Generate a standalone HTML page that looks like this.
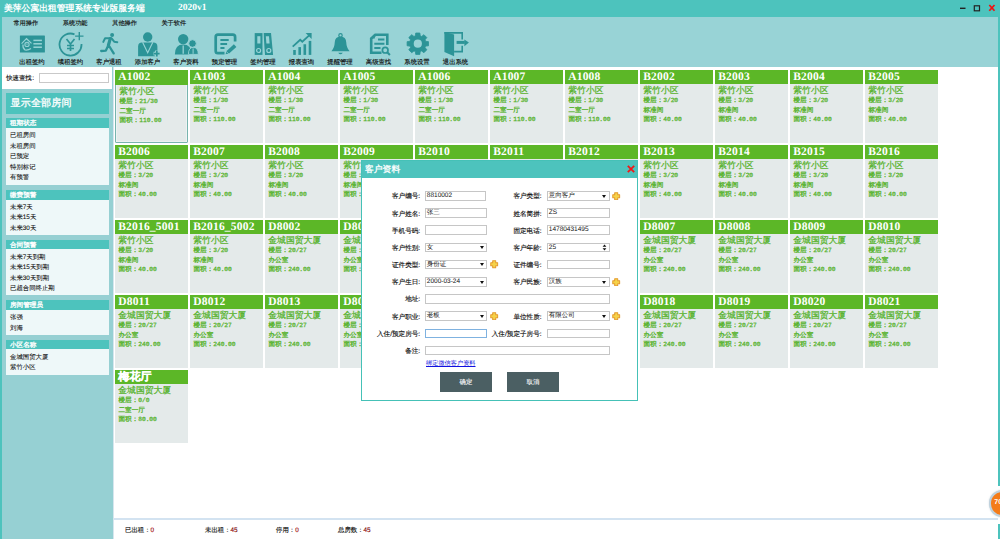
<!DOCTYPE html>
<html><head><meta charset="utf-8"><style>
*{margin:0;padding:0;box-sizing:border-box}
html,body{width:1000px;height:539px;overflow:hidden;background:#fff;font-family:"Liberation Sans",sans-serif;position:relative;text-rendering:geometricPrecision}
.abs{position:absolute}
#title{position:absolute;left:0;top:0;width:1000px;height:17px;background:#4dc3bd}
#title .t{position:absolute;left:4px;top:1px;font-family:"Liberation Serif",serif;font-weight:bold;color:#fff;font-size:8.8px;line-height:15px;white-space:nowrap}
#title .v{position:absolute;left:178px;top:1px;font-family:"Liberation Serif",serif;font-weight:bold;color:#fff;font-size:9.5px;line-height:15px}
#tb{position:absolute;left:0;top:17px;width:1000px;height:50px;background:#98d3d6;border-left:2px solid #4dc3bd;border-right:2px solid #4dc3bd}
.mn{position:absolute;top:20px;font-size:6.2px;line-height:8px;color:#111;-webkit-text-stroke:0.15px #111;white-space:nowrap}
.ico{position:absolute;top:30.5px;width:26px;height:26px}
.ico svg{display:block}
.tl{position:absolute;top:57.8px;width:50px;text-align:center;font-size:6.35px;line-height:9px;color:#111;-webkit-text-stroke:0.15px #111;white-space:nowrap}
#lp{position:absolute;left:0;top:67px;width:113px;height:472px;background:#96d0d3;border-left:2px solid #4dc3bd}
#qs{position:absolute;left:2px;top:67px;width:110px;height:22px;background:#fff}
#qs .l{position:absolute;left:4.2px;top:7.1px;font-size:6.4px;line-height:9px;color:#111;-webkit-text-stroke:0.15px #111;white-space:nowrap}
#qs .i{position:absolute;left:37.4px;top:6.4px;width:69.5px;height:9.2px;border:1px solid #c9c9c9;background:#fff}
#all{position:absolute;left:6px;top:93px;width:102.5px;height:21px;background:#4dc3bd;color:#fff;font-family:"Liberation Serif",serif;font-size:10px;line-height:21px;padding-left:4.5px;letter-spacing:0.2px;-webkit-text-stroke:0.3px #fff;white-space:nowrap}
.sh{position:absolute;left:6px;width:102.5px;background:#4dc3bd;color:#fff;-webkit-text-stroke:0.3px #fff;font-size:6.6px;padding-left:4px;white-space:nowrap}
.sb{position:absolute;left:6px;width:102.5px;background:#eef8f9}
.si{position:absolute;left:10px;font-size:6.4px;line-height:12px;color:#111;-webkit-text-stroke:0.08px #111;white-space:nowrap}
#main{position:absolute;left:113px;top:67px;width:885px;height:472px;background:#fff;border-left:1px solid #d6e6ee}
#rb{position:absolute;left:998px;top:17px;width:2px;height:522px;background:linear-gradient(to bottom,#4dc3bd 0,#4dc3bd 469.5px,#fff 469.5px,#fff 507px,#4dc3bd 507px)}
.card{position:absolute;width:73px;height:72.5px;background:#e4eaea}
.card.sel{border:1px solid #78b4ae;border-radius:1px;box-shadow:inset 0 0 0 0.6px #f4f8f8}
.card .hd{position:absolute;left:0;top:0;width:73px;height:13.6px;background:#5cb727}
.card.sel .hd{left:-1px;top:-1px;width:73px;height:14.6px}
.card .nm{position:absolute;left:3.2px;top:1px;font-family:"Liberation Serif",serif;font-weight:bold;color:#fff;font-size:11.5px;line-height:13px;letter-spacing:0.2px;white-space:nowrap}
.card .nm.cj{font-size:11px;top:0.5px;-webkit-text-stroke:0.3px #fff}
.card .cm{position:absolute;left:3.3px;top:15px;color:#55b22a;font-size:8.8px;-webkit-text-stroke:0.25px #55b22a;line-height:11px;white-space:nowrap}
.card .l1,.card .l2,.card .l3{position:absolute;left:3.5px;color:#55b22a;font-size:6.6px;line-height:8px;-webkit-text-stroke:0.3px #55b22a;white-space:nowrap}
.card .l1{top:26.6px} .card .l2{top:36.5px} .card .l3{top:45.7px}
.card .d{font-family:"Liberation Mono",monospace;font-size:6.3px;letter-spacing:-0.1px;-webkit-text-stroke:0.25px #55b22a}
#sep{position:absolute;left:114px;top:518px;width:884px;height:1.5px;background:#d3e3f1}
.st{position:absolute;top:525.8px;font-size:6.4px;line-height:9px;color:#111;-webkit-text-stroke:0.15px #111;white-space:nowrap}
.st b{font-weight:normal;color:#e02020;font-family:"Liberation Sans",sans-serif}
#orb{position:absolute;left:989.3px;top:490.2px;width:26.4px;height:26.4px;border-radius:50%;background:#f47c1a;border:2px solid #bfd2de;box-shadow:0 0 1.5px rgba(80,110,130,0.35)}
#orb span{position:absolute;left:3px;top:7px;color:#fff;font-size:7px;font-weight:bold}
#dlg{position:absolute;left:361px;top:160px;width:277px;height:241px;background:#fff;border:1.7px solid #45c1b7}
#dlg .h{position:absolute;left:0;top:0;width:100%;height:16.5px;background:#4dc3bd}
#dlg .h .t{position:absolute;left:3px;top:2px;color:#fff;font-family:"Liberation Serif",serif;font-size:8.8px;line-height:12px;-webkit-text-stroke:0.3px #fff}
.lb{position:absolute;text-align:right;font-size:6.6px;line-height:12px;color:#111;-webkit-text-stroke:0.15px #111;white-space:nowrap}
.in{position:absolute;height:9.5px;border:1px solid #c6c6c6;background:#fff;font-size:6.5px;line-height:8.4px;padding-left:0.8px;color:#111;white-space:nowrap;overflow:hidden}
.in.fo{border-color:#7fb2e0}
.arr{position:absolute;right:2.5px;top:2.5px;width:0;height:0;border-left:2.5px solid transparent;border-right:2.5px solid transparent;border-top:3px solid #111}
.spn{position:absolute;right:3px;top:0.5px;width:0;height:0;border-left:1.8px solid transparent;border-right:1.8px solid transparent;border-bottom:2.2px solid #111}
.spn::after{content:"";position:absolute;left:-1.8px;top:3.6px;border-left:1.8px solid transparent;border-right:1.8px solid transparent;border-top:2.2px solid #111}
.pl{position:absolute}
.lnk{position:absolute;left:426px;top:358.5px;font-size:6.2px;line-height:9px;color:#1010e0;text-decoration:underline;white-space:nowrap}
.btn{position:absolute;top:371.5px;width:52px;height:20.5px;background:#4b5f63;color:#f4f4f4;font-size:6.4px;line-height:22.5px;-webkit-text-stroke:0.1px #fff;text-align:center}
</style></head><body>
<div id="title"><div class="t">美萍公寓出租管理系统专业版服务端</div><div class="v">2020v1</div>
<svg class="abs" style="left:959px;top:4px" width="40" height="9" viewBox="0 0 40 9"><rect x="1" y="3.6" width="5.5" height="1.4" fill="#222"/><rect x="15.3" y="1.8" width="5.2" height="5" fill="none" stroke="#222" stroke-width="1.2"/><path d="M30.3 1 L35.5 6.8 M35.5 1 L30.3 6.8" stroke="#f01010" stroke-width="1.7"/></svg></div>
<div id="tb"></div>
<div class="mn" style="left:13.4px">常用操作</div><div class="mn" style="left:62.8px">系统功能</div><div class="mn" style="left:112.2px">其他操作</div><div class="mn" style="left:161.4px">关于软件</div>
<div class="ico" style="left:19.0px"><svg width="26" height="26" viewBox="0 0 26 26"><rect x="0.9" y="4.5" width="25" height="17" rx="0.5" fill="#2c9497"/>
<rect x="14.4" y="8.65" width="8.5" height="1.5" fill="#98d3d6"/><rect x="14.4" y="12.05" width="8.5" height="1.5" fill="#98d3d6"/><rect x="14.4" y="15.45" width="8.5" height="1.5" fill="#98d3d6"/>
<path d="M2.6 12.6 L7.5 7.7 L12.5 12.4 M4 13.5 Q3.5 17 6 19 Q9 19.5 12 17.5" stroke="#98d3d6" stroke-width="1.2" fill="none"/><circle cx="8" cy="13.4" r="2.1" stroke="#98d3d6" stroke-width="1.1" fill="none"/><path d="M8 12.2 v2" stroke="#98d3d6" stroke-width="0.8"/></svg></div><div class="tl" style="left:7.0px">出租签约</div><div class="ico" style="left:57.5px"><svg width="26" height="26" viewBox="0 0 26 26"><path d="M16.5 3.3 A11 11 0 1 0 23.5 13" stroke="#2c9497" stroke-width="1.8" fill="none"/>
<path d="M17.1 5.1 h8.4 M21.3 0.9 v8.4" stroke="#2c9497" stroke-width="1.4"/>
<path d="M8.5 8 L12.5 13 L16.5 8 M12.5 13 v7 M9 14.5 h7 M9 17.5 h7" stroke="#2c9497" stroke-width="1.7" fill="none"/></svg></div><div class="tl" style="left:45.5px">续租签约</div><div class="ico" style="left:96.0px"><svg width="26" height="26" viewBox="0 0 26 26"><circle cx="16.1" cy="3.9" r="2" fill="#2c9497"/>
<path d="M7.3 10.9 L9.1 7.3 L15.6 7.3 L18.2 10.7 L21.3 11.2" stroke="#2c9497" stroke-width="2" fill="none" stroke-linejoin="round" stroke-linecap="round"/>
<path d="M14.3 7.6 L12.4 14.2" stroke="#2c9497" stroke-width="3.2" stroke-linecap="round"/>
<path d="M12.5 14 L9.9 19.6 L5.2 20 M12.5 14 L17.7 22.4" stroke="#2c9497" stroke-width="2.3" fill="none" stroke-linejoin="round" stroke-linecap="round"/></svg></div><div class="tl" style="left:84.0px">客户退租</div><div class="ico" style="left:134.5px"><svg width="26" height="26" viewBox="0 0 26 26"><circle cx="12.7" cy="6" r="4.7" fill="#2c9497"/>
<path d="M3.1 25.2 V15.5 Q3.1 11.5 7 11.5 H18.3 Q22.4 11.5 22.4 15.5 V25.2 Z" fill="#2c9497"/>
<path d="M7.6 11.3 L12.7 21.8 L17.8 11.3" stroke="#98d3d6" stroke-width="1.1" fill="none"/>
<path d="M18.6 22.6 h6.4 M21.8 19.4 v6.4" stroke="#98d3d6" stroke-width="3.6"/><path d="M19 22.6 h5.6 M21.8 19.8 v5.6" stroke="#2c9497" stroke-width="1.7"/></svg></div><div class="tl" style="left:122.5px">添加客户</div><div class="ico" style="left:173.0px"><svg width="26" height="26" viewBox="0 0 26 26"><circle cx="10.2" cy="8.1" r="5.2" fill="#2c9497"/>
<path d="M1.9 23.4 Q1.9 13.5 10.2 13.5 Q18.5 13.5 18.5 23.4 Z" fill="#2c9497"/><path d="M10.2 14.5 V22.8" stroke="#98d3d6" stroke-width="1.3"/>
<circle cx="19.5" cy="12.5" r="3.8" fill="#2c9497" stroke="#98d3d6" stroke-width="0.9"/><path d="M15.4 23.4 Q15.4 16.4 20.3 16.4 Q25.3 16.4 25.3 23.4 Z" fill="#2c9497" stroke="#98d3d6" stroke-width="0.9"/><path d="M20.1 17.4 V22.8" stroke="#98d3d6" stroke-width="1"/></svg></div><div class="tl" style="left:161.0px">客户资料</div><div class="ico" style="left:211.5px"><svg width="26" height="26" viewBox="0 0 26 26"><path d="M23.1 10.4 V5.9 Q23.1 3.7 20.9 3.7 H5.9 Q3.7 3.7 3.7 5.9 V19.9 Q3.7 22.1 5.9 22.1 H12.5" stroke="#2c9497" stroke-width="2.7" fill="none"/>
<path d="M8.4 9.1 H16.7 M8.4 13 H15.1 M8.4 17.1 H12.5" stroke="#2c9497" stroke-width="2"/><path d="M13.6 23.2 L14.6 19.9 L21.9 13.3 L24.4 16 L17.1 22.6 Z" fill="#2c9497"/><path d="M14.4 20.6 L17 23" stroke="#98d3d6" stroke-width="0.7"/></svg></div><div class="tl" style="left:199.5px">预定管理</div><div class="ico" style="left:250.0px"><svg width="26" height="26" viewBox="0 0 26 26"><rect x="4.7" y="2.1" width="8" height="21.8" fill="#2c9497"/><path d="M13.5 2.1 H21 L23.1 23.9 H15 Z" fill="#2c9497"/>
<rect x="7.3" y="5.2" width="3.1" height="7.3" fill="#98d3d6"/><path d="M15.8 5.2 H19 L19.6 12.5 H16.4 Z" fill="#98d3d6"/><circle cx="8.6" cy="19.5" r="2" fill="none" stroke="#98d3d6" stroke-width="1.2"/><circle cx="18.8" cy="19.5" r="2" fill="none" stroke="#98d3d6" stroke-width="1.2"/><path d="M13.1 2 V24" stroke="#98d3d6" stroke-width="0.8"/></svg></div><div class="tl" style="left:238.0px">签约管理</div><div class="ico" style="left:288.5px"><svg width="26" height="26" viewBox="0 0 26 26"><path d="M3.7 15.6 L11.2 8.8 L13.3 10.7 L21 3.6" stroke="#2c9497" stroke-width="1.8" fill="none"/><path d="M16.6 2.1 H22.6 V8.1 Z" fill="#2c9497"/>
<rect x="4.2" y="19" width="2.6" height="4.9" fill="#2c9497"/><rect x="9.4" y="16.1" width="2.6" height="7.8" fill="#2c9497"/><rect x="14.5" y="13.25" width="2.6" height="10.65" fill="#2c9497"/><rect x="19.7" y="9.9" width="2.6" height="14" fill="#2c9497"/></svg></div><div class="tl" style="left:276.5px">报表查询</div><div class="ico" style="left:327.0px"><svg width="26" height="26" viewBox="0 0 26 26"><circle cx="13.5" cy="4.4" r="1.7" fill="none" stroke="#2c9497" stroke-width="1.2"/>
<path d="M13.5 5.8 Q19 5.8 19.2 11 Q19.5 17 22.6 20.3 H4.4 Q7.5 17 7.8 11 Q8 5.8 13.5 5.8Z" fill="#2c9497"/><path d="M11.2 21.8 Q13.5 24.8 15.8 21.8 Z" fill="#2c9497"/></svg></div><div class="tl" style="left:315.0px">提醒管理</div><div class="ico" style="left:365.5px"><svg width="26" height="26" viewBox="0 0 26 26"><path d="M15.5 21.8 H5.2 V7.5 L9.5 3.7 H21.3 V14" stroke="#2c9497" stroke-width="2.6" fill="none"/><path d="M3.9 7.6 L8.8 2.4 V7.6 Z" fill="#2c9497"/>
<path d="M12 8.6 H18.4 M8.3 12.7 H18.4 M8.3 16.9 H14.5" stroke="#2c9497" stroke-width="2"/><circle cx="19.2" cy="19.2" r="2.8" fill="none" stroke="#2c9497" stroke-width="1.7"/><path d="M21.2 21.2 L23.9 23.9" stroke="#2c9497" stroke-width="2.1"/></svg></div><div class="tl" style="left:353.5px">高级查找</div><div class="ico" style="left:404.0px"><svg width="26" height="26" viewBox="0 0 26 26"><path d="M11.38 4.87 L11.74 2.00 L15.86 2.00 L16.22 4.87 L17.63 5.45 L19.91 3.68 L22.82 6.59 L21.05 8.87 L21.63 10.28 L24.50 10.64 L24.50 14.76 L21.63 15.12 L21.05 16.53 L22.82 18.81 L19.91 21.72 L17.63 19.95 L16.22 20.53 L15.86 23.40 L11.74 23.40 L11.38 20.53 L9.97 19.95 L7.69 21.72 L4.78 18.81 L6.55 16.53 L5.97 15.12 L3.10 14.76 L3.10 10.64 L5.97 10.28 L6.55 8.87 L4.78 6.59 L7.69 3.68 L9.97 5.45Z" fill="#2c9497" stroke="#2c9497" stroke-width="0.8" stroke-linejoin="round"/><circle cx="13.8" cy="12.7" r="4.1" fill="#98d3d6"/></svg></div><div class="tl" style="left:392.0px">系统设置</div><div class="ico" style="left:442.5px"><svg width="26" height="26" viewBox="0 0 26 26"><path d="M1.4 1.9 H19.2 V8.6 M19.2 14.7 V20.6 H11.1" stroke="#2c9497" stroke-width="1.6" fill="none"/>
<path d="M1.4 1.1 L11.1 3.6 V25.3 L1.4 20.9 Z" fill="#2c9497"/><path d="M13.6 11.4 H21.8" stroke="#2c9497" stroke-width="3"/><path d="M21.4 8.4 L25.9 11.4 L21.4 15.3 Z" fill="#2c9497"/></svg></div><div class="tl" style="left:430.5px">退出系统</div>
<div id="lp"></div>
<div id="qs"><div class="l">快速查找<span style="font-family:Liberation Sans;margin-left:0.6px">:</span></div><div class="i"></div></div>
<div id="all">显示全部房间</div>
<div class="sh" style="top:118px;height:10px;line-height:11.6px">租期状态</div><div class="sb" style="top:128px;height:57px"></div><div class="si" style="top:130.4px">已租房间</div><div class="si" style="top:140.9px">未租房间</div><div class="si" style="top:151.4px">已预定</div><div class="si" style="top:161.9px">特别标记</div><div class="si" style="top:172.4px">有预警</div><div class="sh" style="top:190px;height:9.5px;line-height:11.1px">缴费预警</div><div class="sb" style="top:199.5px;height:35.5px"></div><div class="si" style="top:201.7px">未来7天</div><div class="si" style="top:212.2px">未来15天</div><div class="si" style="top:222.7px">未来30天</div><div class="sh" style="top:239.5px;height:9.5px;line-height:11.1px">合同预警</div><div class="sb" style="top:249px;height:46px"></div><div class="si" style="top:251.7px">未来7天到期</div><div class="si" style="top:262.2px">未来15天到期</div><div class="si" style="top:272.7px">未来30天到期</div><div class="si" style="top:283.2px">已超合同终止期</div><div class="sh" style="top:299.5px;height:10.5px;line-height:12.1px">房间管理员</div><div class="sb" style="top:310px;height:25px"></div><div class="si" style="top:312.0px">张强</div><div class="si" style="top:322.5px">刘海</div><div class="sh" style="top:339.5px;height:9.5px;line-height:11.1px">小区名称</div><div class="sb" style="top:349px;height:25.5px"></div><div class="si" style="top:351.7px">金城国贸大厦</div><div class="si" style="top:362.2px">紫竹小区</div>
<div id="main"></div>
<div id="rb"></div>
<div class="card sel" style="left:115px;top:70px"><div class="hd"><span class="nm">A1002</span></div><div class="cm">紫竹小区</div><div class="l1">楼层：<span class="d">21/30</span></div><div class="l2">二室一厅</div><div class="l3">面积：<span class="d">110.00</span></div></div><div class="card" style="left:190px;top:70px"><div class="hd"><span class="nm">A1003</span></div><div class="cm">紫竹小区</div><div class="l1">楼层：<span class="d">1/30</span></div><div class="l2">二室一厅</div><div class="l3">面积：<span class="d">110.00</span></div></div><div class="card" style="left:265px;top:70px"><div class="hd"><span class="nm">A1004</span></div><div class="cm">紫竹小区</div><div class="l1">楼层：<span class="d">1/30</span></div><div class="l2">二室一厅</div><div class="l3">面积：<span class="d">110.00</span></div></div><div class="card" style="left:340px;top:70px"><div class="hd"><span class="nm">A1005</span></div><div class="cm">紫竹小区</div><div class="l1">楼层：<span class="d">1/30</span></div><div class="l2">二室一厅</div><div class="l3">面积：<span class="d">110.00</span></div></div><div class="card" style="left:415px;top:70px"><div class="hd"><span class="nm">A1006</span></div><div class="cm">紫竹小区</div><div class="l1">楼层：<span class="d">1/30</span></div><div class="l2">二室一厅</div><div class="l3">面积：<span class="d">110.00</span></div></div><div class="card" style="left:490px;top:70px"><div class="hd"><span class="nm">A1007</span></div><div class="cm">紫竹小区</div><div class="l1">楼层：<span class="d">1/30</span></div><div class="l2">二室一厅</div><div class="l3">面积：<span class="d">110.00</span></div></div><div class="card" style="left:565px;top:70px"><div class="hd"><span class="nm">A1008</span></div><div class="cm">紫竹小区</div><div class="l1">楼层：<span class="d">1/30</span></div><div class="l2">二室一厅</div><div class="l3">面积：<span class="d">110.00</span></div></div><div class="card" style="left:640px;top:70px"><div class="hd"><span class="nm">B2002</span></div><div class="cm">紫竹小区</div><div class="l1">楼层：<span class="d">3/20</span></div><div class="l2">标准间</div><div class="l3">面积：<span class="d">40.00</span></div></div><div class="card" style="left:715px;top:70px"><div class="hd"><span class="nm">B2003</span></div><div class="cm">紫竹小区</div><div class="l1">楼层：<span class="d">3/20</span></div><div class="l2">标准间</div><div class="l3">面积：<span class="d">40.00</span></div></div><div class="card" style="left:790px;top:70px"><div class="hd"><span class="nm">B2004</span></div><div class="cm">紫竹小区</div><div class="l1">楼层：<span class="d">3/20</span></div><div class="l2">标准间</div><div class="l3">面积：<span class="d">40.00</span></div></div><div class="card" style="left:865px;top:70px"><div class="hd"><span class="nm">B2005</span></div><div class="cm">紫竹小区</div><div class="l1">楼层：<span class="d">3/20</span></div><div class="l2">标准间</div><div class="l3">面积：<span class="d">40.00</span></div></div><div class="card" style="left:115px;top:145px"><div class="hd"><span class="nm">B2006</span></div><div class="cm">紫竹小区</div><div class="l1">楼层：<span class="d">3/20</span></div><div class="l2">标准间</div><div class="l3">面积：<span class="d">40.00</span></div></div><div class="card" style="left:190px;top:145px"><div class="hd"><span class="nm">B2007</span></div><div class="cm">紫竹小区</div><div class="l1">楼层：<span class="d">3/20</span></div><div class="l2">标准间</div><div class="l3">面积：<span class="d">40.00</span></div></div><div class="card" style="left:265px;top:145px"><div class="hd"><span class="nm">B2008</span></div><div class="cm">紫竹小区</div><div class="l1">楼层：<span class="d">3/20</span></div><div class="l2">标准间</div><div class="l3">面积：<span class="d">40.00</span></div></div><div class="card" style="left:340px;top:145px"><div class="hd"><span class="nm">B2009</span></div><div class="cm">紫竹小区</div><div class="l1">楼层：<span class="d">3/20</span></div><div class="l2">标准间</div><div class="l3">面积：<span class="d">40.00</span></div></div><div class="card" style="left:415px;top:145px"><div class="hd"><span class="nm">B2010</span></div><div class="cm">紫竹小区</div><div class="l1">楼层：<span class="d">3/20</span></div><div class="l2">标准间</div><div class="l3">面积：<span class="d">40.00</span></div></div><div class="card" style="left:490px;top:145px"><div class="hd"><span class="nm">B2011</span></div><div class="cm">紫竹小区</div><div class="l1">楼层：<span class="d">3/20</span></div><div class="l2">标准间</div><div class="l3">面积：<span class="d">40.00</span></div></div><div class="card" style="left:565px;top:145px"><div class="hd"><span class="nm">B2012</span></div><div class="cm">紫竹小区</div><div class="l1">楼层：<span class="d">3/20</span></div><div class="l2">标准间</div><div class="l3">面积：<span class="d">40.00</span></div></div><div class="card" style="left:640px;top:145px"><div class="hd"><span class="nm">B2013</span></div><div class="cm">紫竹小区</div><div class="l1">楼层：<span class="d">3/20</span></div><div class="l2">标准间</div><div class="l3">面积：<span class="d">40.00</span></div></div><div class="card" style="left:715px;top:145px"><div class="hd"><span class="nm">B2014</span></div><div class="cm">紫竹小区</div><div class="l1">楼层：<span class="d">3/20</span></div><div class="l2">标准间</div><div class="l3">面积：<span class="d">40.00</span></div></div><div class="card" style="left:790px;top:145px"><div class="hd"><span class="nm">B2015</span></div><div class="cm">紫竹小区</div><div class="l1">楼层：<span class="d">3/20</span></div><div class="l2">标准间</div><div class="l3">面积：<span class="d">40.00</span></div></div><div class="card" style="left:865px;top:145px"><div class="hd"><span class="nm">B2016</span></div><div class="cm">紫竹小区</div><div class="l1">楼层：<span class="d">3/20</span></div><div class="l2">标准间</div><div class="l3">面积：<span class="d">40.00</span></div></div><div class="card" style="left:115px;top:220px"><div class="hd"><span class="nm">B2016_5001</span></div><div class="cm">紫竹小区</div><div class="l1">楼层：<span class="d">3/20</span></div><div class="l2">标准间</div><div class="l3">面积：<span class="d">40.00</span></div></div><div class="card" style="left:190px;top:220px"><div class="hd"><span class="nm">B2016_5002</span></div><div class="cm">紫竹小区</div><div class="l1">楼层：<span class="d">3/20</span></div><div class="l2">标准间</div><div class="l3">面积：<span class="d">40.00</span></div></div><div class="card" style="left:265px;top:220px"><div class="hd"><span class="nm">D8002</span></div><div class="cm">金城国贸大厦</div><div class="l1">楼层：<span class="d">20/27</span></div><div class="l2">办公室</div><div class="l3">面积：<span class="d">240.00</span></div></div><div class="card" style="left:340px;top:220px"><div class="hd"><span class="nm">D8003</span></div><div class="cm">金城国贸大厦</div><div class="l1">楼层：<span class="d">20/27</span></div><div class="l2">办公室</div><div class="l3">面积：<span class="d">240.00</span></div></div><div class="card" style="left:415px;top:220px"><div class="hd"><span class="nm">D8004</span></div><div class="cm">金城国贸大厦</div><div class="l1">楼层：<span class="d">20/27</span></div><div class="l2">办公室</div><div class="l3">面积：<span class="d">240.00</span></div></div><div class="card" style="left:490px;top:220px"><div class="hd"><span class="nm">D8005</span></div><div class="cm">金城国贸大厦</div><div class="l1">楼层：<span class="d">20/27</span></div><div class="l2">办公室</div><div class="l3">面积：<span class="d">240.00</span></div></div><div class="card" style="left:565px;top:220px"><div class="hd"><span class="nm">D8006</span></div><div class="cm">金城国贸大厦</div><div class="l1">楼层：<span class="d">20/27</span></div><div class="l2">办公室</div><div class="l3">面积：<span class="d">240.00</span></div></div><div class="card" style="left:640px;top:220px"><div class="hd"><span class="nm">D8007</span></div><div class="cm">金城国贸大厦</div><div class="l1">楼层：<span class="d">20/27</span></div><div class="l2">办公室</div><div class="l3">面积：<span class="d">240.00</span></div></div><div class="card" style="left:715px;top:220px"><div class="hd"><span class="nm">D8008</span></div><div class="cm">金城国贸大厦</div><div class="l1">楼层：<span class="d">20/27</span></div><div class="l2">办公室</div><div class="l3">面积：<span class="d">240.00</span></div></div><div class="card" style="left:790px;top:220px"><div class="hd"><span class="nm">D8009</span></div><div class="cm">金城国贸大厦</div><div class="l1">楼层：<span class="d">20/27</span></div><div class="l2">办公室</div><div class="l3">面积：<span class="d">240.00</span></div></div><div class="card" style="left:865px;top:220px"><div class="hd"><span class="nm">D8010</span></div><div class="cm">金城国贸大厦</div><div class="l1">楼层：<span class="d">20/27</span></div><div class="l2">办公室</div><div class="l3">面积：<span class="d">240.00</span></div></div><div class="card" style="left:115px;top:295px"><div class="hd"><span class="nm">D8011</span></div><div class="cm">金城国贸大厦</div><div class="l1">楼层：<span class="d">20/27</span></div><div class="l2">办公室</div><div class="l3">面积：<span class="d">240.00</span></div></div><div class="card" style="left:190px;top:295px"><div class="hd"><span class="nm">D8012</span></div><div class="cm">金城国贸大厦</div><div class="l1">楼层：<span class="d">20/27</span></div><div class="l2">办公室</div><div class="l3">面积：<span class="d">240.00</span></div></div><div class="card" style="left:265px;top:295px"><div class="hd"><span class="nm">D8013</span></div><div class="cm">金城国贸大厦</div><div class="l1">楼层：<span class="d">20/27</span></div><div class="l2">办公室</div><div class="l3">面积：<span class="d">240.00</span></div></div><div class="card" style="left:340px;top:295px"><div class="hd"><span class="nm">D8014</span></div><div class="cm">金城国贸大厦</div><div class="l1">楼层：<span class="d">20/27</span></div><div class="l2">办公室</div><div class="l3">面积：<span class="d">240.00</span></div></div><div class="card" style="left:415px;top:295px"><div class="hd"><span class="nm">D8015</span></div><div class="cm">金城国贸大厦</div><div class="l1">楼层：<span class="d">20/27</span></div><div class="l2">办公室</div><div class="l3">面积：<span class="d">240.00</span></div></div><div class="card" style="left:490px;top:295px"><div class="hd"><span class="nm">D8016</span></div><div class="cm">金城国贸大厦</div><div class="l1">楼层：<span class="d">20/27</span></div><div class="l2">办公室</div><div class="l3">面积：<span class="d">240.00</span></div></div><div class="card" style="left:565px;top:295px"><div class="hd"><span class="nm">D8017</span></div><div class="cm">金城国贸大厦</div><div class="l1">楼层：<span class="d">20/27</span></div><div class="l2">办公室</div><div class="l3">面积：<span class="d">240.00</span></div></div><div class="card" style="left:640px;top:295px"><div class="hd"><span class="nm">D8018</span></div><div class="cm">金城国贸大厦</div><div class="l1">楼层：<span class="d">20/27</span></div><div class="l2">办公室</div><div class="l3">面积：<span class="d">240.00</span></div></div><div class="card" style="left:715px;top:295px"><div class="hd"><span class="nm">D8019</span></div><div class="cm">金城国贸大厦</div><div class="l1">楼层：<span class="d">20/27</span></div><div class="l2">办公室</div><div class="l3">面积：<span class="d">240.00</span></div></div><div class="card" style="left:790px;top:295px"><div class="hd"><span class="nm">D8020</span></div><div class="cm">金城国贸大厦</div><div class="l1">楼层：<span class="d">20/27</span></div><div class="l2">办公室</div><div class="l3">面积：<span class="d">240.00</span></div></div><div class="card" style="left:865px;top:295px"><div class="hd"><span class="nm">D8021</span></div><div class="cm">金城国贸大厦</div><div class="l1">楼层：<span class="d">20/27</span></div><div class="l2">办公室</div><div class="l3">面积：<span class="d">240.00</span></div></div><div class="card" style="left:115px;top:370px"><div class="hd"><span class="nm cj">梅花厅</span></div><div class="cm">金城国贸大厦</div><div class="l1">楼层：<span class="d">0/0</span></div><div class="l2">二室一厅</div><div class="l3">面积：<span class="d">80.00</span></div></div>
<div id="sep"></div>
<div class="st" style="left:125px">已出租：<b>0</b></div>
<div class="st" style="left:205px">未出租：<b>45</b></div>
<div class="st" style="left:276px">停用：<b>0</b></div>
<div class="st" style="left:338px">总房数：<b>45</b></div>
<div id="orb"><span>70</span></div>
<div id="dlg"><div class="h"><div class="t">客户资料</div>
<svg class="abs" style="left:265px;top:4px" width="8" height="8" viewBox="0 0 8 8"><path d="M0.8 0.8 L7.2 7.2 M7.2 0.8 L0.8 7.2" stroke="#f01818" stroke-width="1.8"/></svg></div></div>
<div class="lb" style="top:191.3px;left:300px;width:120.2px">客户编号:</div><div class="in" style="left:425px;top:191.10000000000002px;width:61px">8810002</div><div class="lb" style="top:191.3px;left:423px;width:118.6px">客户类型:</div><div class="in" style="left:547px;top:191.10000000000002px;width:62.5px">意向客户<span class="arr"></span></div><svg class="pl" style="left:612.3px;top:191.60000000000002px" width="8.4" height="8.4" viewBox="0 0 10 10"><path d="M3.2 0.9 h3.6 v2.3 h2.3 v3.6 h-2.3 v2.3 h-3.6 v-2.3 h-2.3 v-3.6 h2.3z" fill="#f6d348" stroke="#e39a2e" stroke-width="1.2" stroke-linejoin="round"/></svg><div class="lb" style="top:208.5px;left:300px;width:120.2px">客户姓名:</div><div class="in" style="left:425px;top:208.3px;width:62px">张三</div><div class="lb" style="top:208.5px;left:423px;width:118.6px">姓名简拼:</div><div class="in" style="left:547px;top:208.3px;width:62.5px">ZS</div><div class="lb" style="top:225.6px;left:300px;width:120.2px">手机号码:</div><div class="in" style="left:425px;top:225.4px;width:62px"></div><div class="lb" style="top:225.6px;left:423px;width:118.6px">固定电话:</div><div class="in" style="left:547px;top:225.4px;width:62.5px">14780431495</div><div class="lb" style="top:242.8px;left:300px;width:120.2px">客户性别:</div><div class="in" style="left:425px;top:242.60000000000002px;width:62px">女<span class="arr"></span></div><div class="lb" style="top:242.8px;left:423px;width:118.6px">客户年龄:</div><div class="in" style="left:547px;top:242.60000000000002px;width:62.5px">25<svg class="abs" style="right:1.5px;top:0.6px" width="5" height="7" viewBox="0 0 5 7"><path d="M0.6 2.8 L2.5 0.6 L4.4 2.8z M0.6 4.2 L2.5 6.4 L4.4 4.2z" fill="#111"/></svg></div><div class="lb" style="top:260.0px;left:300px;width:120.2px">证件类型:</div><div class="in" style="left:425px;top:259.8px;width:62px">身份证<span class="arr"></span></div><div class="lb" style="top:260.0px;left:423px;width:118.6px">证件编号:</div><div class="in" style="left:547px;top:259.8px;width:62.5px"></div><svg class="pl" style="left:490.40000000000003px;top:260.3px" width="8.4" height="8.4" viewBox="0 0 10 10"><path d="M3.2 0.9 h3.6 v2.3 h2.3 v3.6 h-2.3 v2.3 h-3.6 v-2.3 h-2.3 v-3.6 h2.3z" fill="#f6d348" stroke="#e39a2e" stroke-width="1.2" stroke-linejoin="round"/></svg><div class="lb" style="top:277.2px;left:300px;width:120.2px">客户生日:</div><div class="in" style="left:425px;top:277.0px;width:62px">2000-03-24<span class="arr"></span></div><div class="lb" style="top:277.2px;left:423px;width:118.6px">客户民族:</div><div class="in" style="left:547px;top:277.0px;width:62.5px">汉族<span class="arr"></span></div><svg class="pl" style="left:612.3px;top:277.5px" width="8.4" height="8.4" viewBox="0 0 10 10"><path d="M3.2 0.9 h3.6 v2.3 h2.3 v3.6 h-2.3 v2.3 h-3.6 v-2.3 h-2.3 v-3.6 h2.3z" fill="#f6d348" stroke="#e39a2e" stroke-width="1.2" stroke-linejoin="round"/></svg><div class="lb" style="top:294.3px;left:300px;width:120.2px">地址:</div><div class="in" style="left:425px;top:294.1px;width:184.5px"></div><div class="lb" style="top:311.5px;left:300px;width:120.2px">客户职业:</div><div class="in" style="left:425px;top:311.3px;width:62px">老板<span class="arr"></span></div><svg class="pl" style="left:490.40000000000003px;top:311.8px" width="8.4" height="8.4" viewBox="0 0 10 10"><path d="M3.2 0.9 h3.6 v2.3 h2.3 v3.6 h-2.3 v2.3 h-3.6 v-2.3 h-2.3 v-3.6 h2.3z" fill="#f6d348" stroke="#e39a2e" stroke-width="1.2" stroke-linejoin="round"/></svg><div class="lb" style="top:311.5px;left:423px;width:118.6px">单位性质:</div><div class="in" style="left:547px;top:311.3px;width:62.5px">有限公司<span class="arr"></span></div><svg class="pl" style="left:612.3px;top:311.8px" width="8.4" height="8.4" viewBox="0 0 10 10"><path d="M3.2 0.9 h3.6 v2.3 h2.3 v3.6 h-2.3 v2.3 h-3.6 v-2.3 h-2.3 v-3.6 h2.3z" fill="#f6d348" stroke="#e39a2e" stroke-width="1.2" stroke-linejoin="round"/></svg><div class="lb" style="top:328.7px;left:300px;width:120.2px">入住/预定房号:</div><div class="in fo" style="left:425px;top:328.5px;width:62px"></div><div class="lb" style="top:328.7px;left:423px;width:118.6px">入住/预定子房号:</div><div class="in" style="left:547px;top:328.5px;width:62.5px"></div><div class="lb" style="top:345.8px;left:300px;width:120.2px">备注:</div><div class="in" style="left:425px;top:345.6px;width:184.5px"></div>
<div class="lnk">绑定微信客户资料</div>
<div class="btn" style="left:440px">确定</div>
<div class="btn" style="left:507px">取消</div>
</body></html>
